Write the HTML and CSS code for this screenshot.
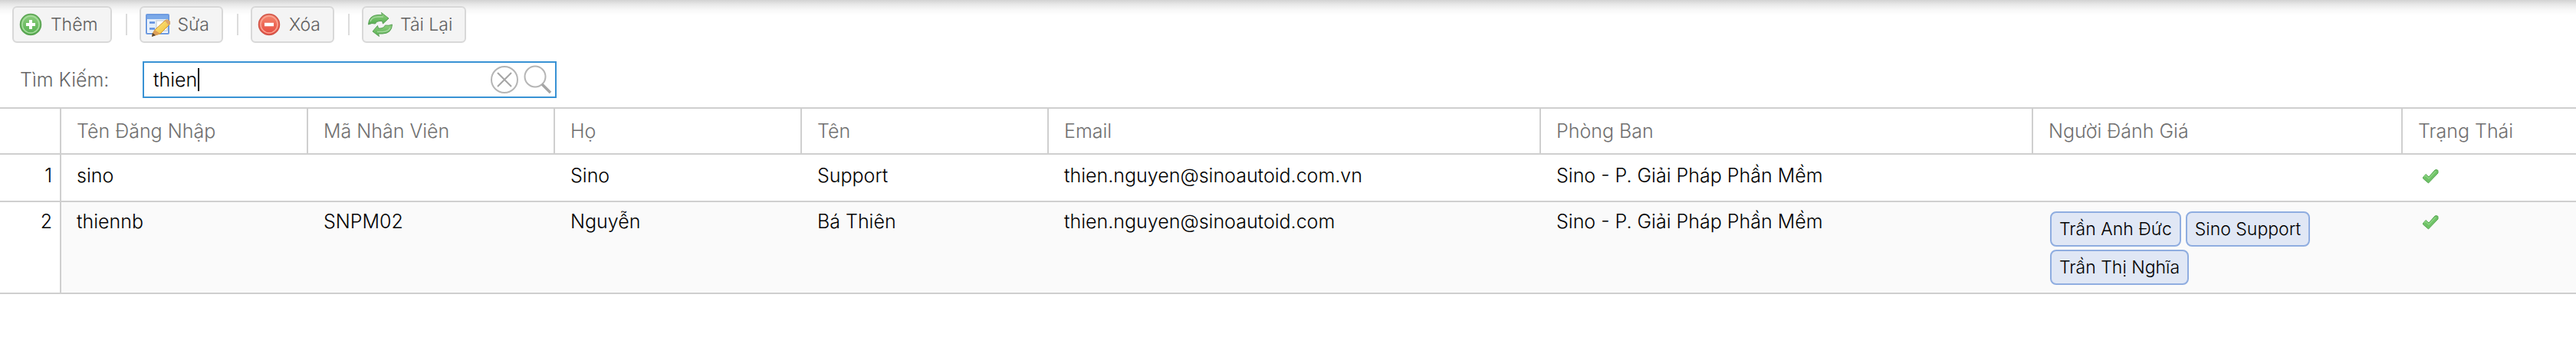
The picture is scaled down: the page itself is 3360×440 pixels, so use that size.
FILE: index.html
```html
<!DOCTYPE html>
<html lang="vi">
<head>
<meta charset="utf-8">
<title>Người dùng</title>
<link rel="stylesheet" href="styles.css">
</head>
<body>
<svg class="defs" aria-hidden="true">
  <defs>
    <linearGradient id="green" x1="0" y1="0" x2="0" y2="1"><stop offset="0" stop-color="#8fd07f"/><stop offset="1" stop-color="#55ae50"/></linearGradient>
    <linearGradient id="red" x1="0" y1="0" x2="0" y2="1"><stop offset="0" stop-color="#f58a70"/><stop offset="1" stop-color="#e64a3f"/></linearGradient>
    <linearGradient id="pencil" x1="0" y1="0" x2="1" y2="1"><stop offset="0" stop-color="#fff09a"/><stop offset="1" stop-color="#eeb422"/></linearGradient>
    <symbol id="tick" viewBox="0 0 32 32">
      <path d="M6.500 17.500 L10 13.500 L14 17 L22 8 Q24 7 26 8.500 L26 12 L13.500 25 L6.500 19 Z" fill="#6fc267" stroke="#58a653" stroke-width="1" stroke-linejoin="round"/>
      <path d="M8 17 L10 15 L14 19 L23 9.500" fill="none" stroke="#8bd582" stroke-width="1.500"/>
    </symbol>
  </defs>
</svg>
<div class="toolbar" role="toolbar">
  <button class="btn" type="button">
    <svg class="icon" viewBox="0 0 32 32" aria-hidden="true">
      <circle cx="16" cy="16" r="13.500" fill="url(#green)" stroke="#58a150" stroke-width="1.500"/>
      <circle cx="16" cy="16" r="11" fill="none" stroke="#a9dca0" stroke-width="1.500"/>
      <path d="M16 10v12M10 16h12" stroke="#fff" stroke-width="4"/>
    </svg>
    <span>Thêm</span>
  </button>
  <i class="sep"></i>
  <button class="btn" type="button">
    <svg class="icon" viewBox="0 0 32 32" aria-hidden="true">
      <rect x="1" y="3" width="29" height="25" rx="1" fill="#fff" stroke="#6f9be0" stroke-width="2"/>
      <rect x="2" y="4" width="27" height="5" fill="#7ba9e8"/>
      <rect x="3" y="9" width="25" height="17" fill="#e3eefb"/>
      <path d="M5 13.500h7M5 21.500h7" stroke="#5f8fe0" stroke-width="2.500"/>
      <rect x="14" y="11" width="14" height="13" fill="#fff" stroke="#cdd5de" stroke-width="1.500"/>
      <path d="M12 23 L25 11 Q29 8 32 13 L32 15 L19 28 L9 31 L9 28 Z" fill="url(#pencil)" stroke="#cf9430" stroke-width="1"/>
      <path d="M25 11 Q29 8 32 13 L32 15 L30 17 Z" fill="#dba26c"/>
      <path d="M12 23 L19 28 L9 31 L9 28 Z" fill="#dc9f58"/>
      <path d="M9 27 L13 30 L8 32 Z" fill="#5a4330"/>
    </svg>
    <span>Sửa</span>
  </button>
  <i class="sep"></i>
  <button class="btn" type="button">
    <svg class="icon" viewBox="0 0 32 32" aria-hidden="true">
      <circle cx="16" cy="16" r="13.500" fill="url(#red)" stroke="#d0564a" stroke-width="1.500"/>
      <circle cx="16" cy="16" r="11" fill="none" stroke="#f9a594" stroke-width="1.500"/>
      <path d="M10 16h12" stroke="#fff" stroke-width="4.500"/>
    </svg>
    <span>Xóa</span>
  </button>
  <i class="sep"></i>
  <button class="btn" type="button">
    <svg class="icon" viewBox="0 0 32 32" aria-hidden="true">
      <g fill="url(#green)" stroke="#5a9f57" stroke-width="1" stroke-linejoin="round">
        <path d="M0.500 16 Q1 4 13 3.500 L18.500 3.500 L17.500 0.500 L27 8 L19.500 15 L18.500 11.500 L15 11.500 Q11 11.500 9.500 15 Q5 13.500 0.500 16 Z"/>
        <path d="M31.500 16 Q31 27.500 19 28 L13.500 28 L14.500 31.500 L6 25 L12.500 17.500 L13.500 21 L17 21 Q21 20.500 22.500 17 Q27 18 31.500 16 Z"/>
      </g>
      <path d="M3 12 Q5 6 13 6 L20 6M29 20 Q27 25 19 25.500 L12 25.500" fill="none" stroke="#a6d89f" stroke-width="1.500"/>
    </svg>
    <span>Tải Lại</span>
  </button>
</div>
<div class="search">
  <label class="search-label" for="q">Tìm Kiếm:</label>
  <div class="field">
    <span class="entry"><input id="q" type="text" value="thien"><i class="caret"></i></span>
    <button class="trigger" type="button" aria-label="Xóa tìm kiếm">
      <svg viewBox="0 0 40 40" aria-hidden="true"><circle cx="20" cy="20" r="17" fill="none" stroke="#b5b5b5" stroke-width="2"/><path d="M11 11l18 18M29 11L11 29" stroke="#a5a5a5" stroke-width="2"/></svg>
    </button>
    <button class="trigger" type="button" aria-label="Tìm">
      <svg viewBox="0 0 40 40" aria-hidden="true"><circle cx="16" cy="16" r="13.500" fill="none" stroke="#b5b5b5" stroke-width="2"/><path d="M25 26l11 11" stroke="#a5a5a5" stroke-width="3.500"/></svg>
    </button>
  </div>
</div>
<table class="grid">
  <colgroup><col class="c-num"><col class="c-s"><col class="c-s"><col class="c-s"><col class="c-s"><col class="c-l"><col class="c-l"><col class="c-m"><col></colgroup>
  <thead>
    <tr><th></th><th>Tên Đăng Nhập</th><th>Mã Nhân Viên</th><th>Họ</th><th>Tên</th><th>Email</th><th>Phòng Ban</th><th>Người Đánh Giá</th><th>Trạng Thái</th></tr>
  </thead>
  <tbody>
    <tr><td class="num">1</td><td>sino</td><td></td><td>Sino</td><td>Support</td><td>thien.nguyen@sinoautoid.com.vn</td><td>Sino - P. Giải Pháp Phần Mềm</td><td></td><td><svg class="tick" role="img" aria-label="Có"><use href="#tick"/></svg></td></tr>
    <tr class="alt"><td class="num">2</td><td>thiennb</td><td>SNPM02</td><td>Nguyễn</td><td>Bá Thiên</td><td>thien.nguyen@sinoautoid.com</td><td>Sino - P. Giải Pháp Phần Mềm</td><td><div class="tags"><span class="tag">Trần Anh Đức</span><span class="tag">Sino Support</span><span class="tag">Trần Thị Nghĩa</span></div></td><td><svg class="tick" role="img" aria-label="Có"><use href="#tick"/></svg></td></tr>
  </tbody>
</table>
</body>
</html>
```
FILE: styles.css
```css
* { box-sizing: border-box; }
body {
  margin: 0;
  background: #fff linear-gradient(#d2d2d2, #e9e9e9 6px, #f8f8f8 13px, #fff 20px) no-repeat top / 100% 20px;
  font: 300 25px/30px Inter, "Liberation Sans", sans-serif;
  color: #000;
}
button, input { font: inherit; color: inherit; }
.defs { position: absolute; width: 0; height: 0; }
.toolbar { display: flex; align-items: center; padding: 8px 16px; }
.btn {
  display: flex;
  align-items: center;
  gap: 10px;
  height: 48px;
  padding: 0 16px 0 6px;
  border: 2px solid #d8d8d8;
  border-radius: 6px;
  background: #f4f4f4;
  font-size: 23px;
  color: #606060;
}
.icon { width: 32px; height: 32px; flex: none; }
.sep { width: 2px; height: 28px; margin: 0 16px 0 18px; background: #dcdcdc; }
.search { display: flex; align-items: center; padding: 16px 26px 12px; }
.search-label { width: 160px; color: #666; }
.field {
  display: flex;
  align-items: center;
  width: 540px;
  height: 48px;
  border: 2px solid #3892d4;
  background: #fff;
}
.entry { position: relative; flex: 1; display: flex; }
.entry input { width: 100%; border: 0; padding: 0 12px; background: none; outline: 0; }
.caret { position: absolute; left: 70px; top: 0; width: 2px; height: 30px; background: #000; }
.trigger { width: 44px; height: 44px; padding: 2px; border: 0; background: none; }
.trigger svg { display: block; width: 40px; height: 40px; }
.grid { width: 100%; table-layout: fixed; border-collapse: separate; border-spacing: 0; }
.c-num { width: 80px; }
.c-s { width: 322px; }
.c-l { width: 642px; }
.c-m { width: 482px; }
th {
  height: 62px;
  padding: 0 20px;
  border: solid #cfcfcf;
  border-width: 2px 2px 2px 0;
  font-weight: 300;
  text-align: left;
  color: #707070;
}
th:last-child { border-right: 0; }
td { height: 62px; padding: 12px 20px 14px; border-bottom: 2px solid #cfcfcf; vertical-align: top; }
.alt td { height: 120px; padding: 10px 20px 8px; background: #fafafa; }
td.num, .alt td.num { padding-right: 10px; border-right: 2px solid #cfcfcf; background: #fff; text-align: right; }
.tags { display: flex; flex-wrap: wrap; gap: 4px 6px; padding: 2px 0 0 2px; }
.tag {
  padding: 6px 10px;
  border: 2px solid #8fade0;
  border-radius: 8px;
  background: #e0e7f5;
  font-size: 23px;
}
.tick { display: block; width: 32px; height: 32px; }
```
